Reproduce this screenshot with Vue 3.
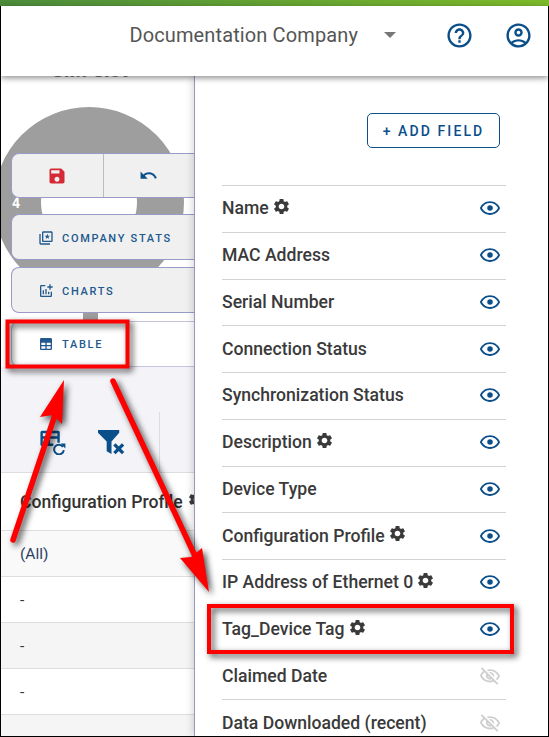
<template>
  <div class="app">
    <div class="topbar"></div>
    <div class="frame">
      <header class="header">
        <span class="company">Documentation Company</span>
        <span class="caret"></span>
        <svg class="head-icon help" viewBox="0 0 24 24"><path d="M11 18h2v-2h-2v2zm1-16C6.48 2 2 6.48 2 12s4.48 10 10 10 10-4.48 10-10S17.52 2 12 2zm0 18c-4.41 0-8-3.59-8-8s3.59-8 8-8 8 3.59 8 8-3.59 8-8 8zm0-14c-2.21 0-4 1.79-4 4h2c0-1.1.9-2 2-2s2 .9 2 2c0 2-3 1.75-3 5h2c0-2.25 3-2.5 3-5 0-2.21-1.79-4-4-4z" /></svg>
        <svg class="head-icon user" viewBox="0 0 24 24"><path d="M12 2C6.48 2 2 6.48 2 12s4.48 10 10 10 10-4.48 10-10S17.52 2 12 2zM7.35 18.5C8.66 17.56 10.26 17 12 17s3.34.56 4.65 1.5c-1.31.94-2.91 1.5-4.65 1.5s-3.34-.56-4.65-1.5zm10.79-1.38C16.45 15.8 14.32 15 12 15s-4.45.8-6.14 2.12C4.7 15.73 4 13.95 4 12c0-4.42 3.58-8 8-8s8 3.58 8 8c0 1.95-.7 3.73-1.86 5.12zM12 6c-1.93 0-3.5 1.57-3.5 3.5S10.07 13 12 13s3.5-1.57 3.5-3.5S13.93 6 12 6zm0 5c-.83 0-1.5-.67-1.5-1.5S11.17 8 12 8s1.5.67 1.5 1.5S12.83 11 12 11z" /></svg>
      </header>

      <div class="body">
        <section class="left">
          <div class="chart">
            <div class="donut"></div>
            <span class="slice-label">4</span>
            <div class="stub"></div>
          </div>
          <div class="pane-title">SIM Slot</div>

          <div class="tabs">
            <div class="actions">
              <div class="action">
                <svg class="save" viewBox="0 0 24 24"><path d="M17 3H5c-1.11 0-2 .9-2 2v14c0 1.1.89 2 2 2h14c1.1 0 2-.9 2-2V7l-4-4zm-5 16c-1.66 0-3-1.34-3-3s1.34-3 3-3 3 1.34 3 3-1.34 3-3 3zm3-10H5V5h10v4z" /></svg>
              </div>
              <div class="action">
                <svg class="undo" viewBox="0 0 24 24"><path d="M12.5 8c-2.65 0-5.05.99-6.9 2.6L2 7v9h9l-3.62-3.62c1.39-1.16 3.16-1.88 5.12-1.88 3.54 0 6.55 2.31 7.6 5.5l2.37-.78C21.08 11.03 17.15 8 12.5 8z" /></svg>
              </div>
            </div>
            <div class="tab stats">
              <svg class="tab-icon" viewBox="0 0 24 24"><path d="M4 6H2v14c0 1.1.9 2 2 2h14v-2H4V6zm16-4H8c-1.1 0-2 .9-2 2v12c0 1.1.9 2 2 2h12c1.1 0 2-.9 2-2V4c0-1.1-.9-2-2-2zm0 14H8V4h12v12z" /><polygon points="14,5.5 15.1,8.6 18.2,8.7 15.7,10.6 16.6,13.6 14,11.8 11.4,13.6 12.3,10.6 9.8,8.7 12.9,8.6" /></svg>
              <span>COMPANY STATS</span>
            </div>
            <div class="tab charts">
              <svg class="tab-icon" viewBox="0 0 24 24"><path d="M22 5v2h-3v3h-2V7h-3V5h3V2h2v3h3zm-3 14H5V5h6V3H5c-1.1 0-2 .9-2 2v14c0 1.1.9 2 2 2h14c1.1 0 2-.9 2-2v-6h-2v6zm-4-6v4h2v-4h-2zm-4 4h2V9h-2v8zm-2 0v-6H7v6h2z" /></svg>
              <span>CHARTS</span>
            </div>
            <div class="tab active">
              <svg class="tab-icon" viewBox="0 0 24 24"><path d="M3 5c0-1.1.9-2 2-2h14c1.1 0 2 .9 2 2v14c0 1.1-.9 2-2 2H5c-1.1 0-2-.9-2-2V5zm2 5v3.5h6V10H5zm8 0v3.5h6V10h-6zM5 15.500V19h6v-3.500H5zm8 0V19h6v-3.500h-6z" fill-rule="evenodd" /></svg>
              <span>TABLE</span>
            </div>
          </div>

          <div class="toolbar">
            <svg class="tool reset" viewBox="0 0 36 32">
              <path d="M3 2h22a2 2 0 0 1 2 2v13h-3v-5H15v6h4v3H5a2 2 0 0 1-2-2V4a2 2 0 0 1 2-2zm3 3v4h18V5H6zm0 7v6h6v-6H6z" fill-rule="evenodd" />
              <path d="M31 22a6 6 0 1 0 1 4" class="reset-arc" />
              <polygon points="28,18 34,18 34,24" />
            </svg>
            <svg class="tool clear" viewBox="0 0 30 28">
              <path d="M1 2h22v3l-8 9v13l-5-3V14L1 5z" />
              <path d="M18 17l9 9M27 17l-9 9" class="clear-x" />
            </svg>
            <div class="tool-sep"></div>
          </div>

          <div class="grid-head">
            <span>Configuration Profile</span>
            <svg class="gear" viewBox="0 0 24 24"><path :d="gearPath" /></svg>
          </div>
          <div v-for="(cell, i) in cells" :key="i" class="grid-row" :class="cell.tone">{{ cell.text }}</div>
        </section>

        <section class="right">
          <button class="add-btn">+ ADD FIELD</button>
          <ul class="fields">
            <li v-for="f in fields" :key="f.name" class="field">
              <span class="field-name">{{ f.name }}</span>
              <svg v-if="f.gear" class="gear" viewBox="0 0 24 24"><path :d="gearPath" /></svg>
              <svg v-if="f.hidden" class="eye off" viewBox="0 0 24 24"><path d="M12 6.500c3.790 0 7.170 2.130 8.820 5.500-.59 1.220-1.420 2.270-2.410 3.120l1.410 1.410c1.390-1.230 2.490-2.770 3.180-4.530C21.270 7.610 17 4.500 12 4.500c-1.270 0-2.490.2-3.640.57l1.650 1.650C10.660 6.590 11.320 6.500 12 6.500zm-1.070 1.140L13 9.710c.57.25 1.030.71 1.280 1.280l2.070 2.070c.08-.34.14-.7.14-1.070C16.500 9.500 14.480 7.500 12 7.500c-.37 0-.72.05-1.070.14zM2.010 3.870l2.680 2.680C3.060 7.830 1.770 9.530 1 11.500 2.730 15.890 7 19 12 19c1.520 0 2.980-.29 4.320-.82l3.420 3.420 1.410-1.410L3.420 2.450 2.010 3.870zm7.500 7.500l2.610 2.610c-.04.01-.08.02-.12.02-1.380 0-2.500-1.120-2.500-2.500 0-.05.01-.08.01-.13zm-3.400-3.400l1.750 1.750c-.23.55-.36 1.150-.36 1.780 0 2.480 2.020 4.500 4.500 4.500.63 0 1.230-.13 1.770-.36l.98.98c-.88.24-1.800.38-2.750.38-3.790 0-7.170-2.130-8.820-5.500.7-1.430 1.720-2.610 2.930-3.530z" /></svg>
              <svg v-else class="eye" viewBox="0 0 24 24"><path d="M12 6.500c3.790 0 7.170 2.130 8.820 5.500-1.650 3.370-5.020 5.500-8.820 5.500S4.830 15.370 3.180 12C4.830 8.630 8.210 6.500 12 6.500m0-2C7 4.500 2.730 7.610 1 12c1.730 4.390 6 7.500 11 7.500s9.270-3.110 11-7.500c-1.730-4.390-6-7.500-11-7.500z" /><circle cx="12" cy="12" r="3" /></svg>
            </li>
          </ul>
        </section>
      </div>
    </div>

    <!-- callouts drawn on top of the screenshot -->
    <svg class="callouts" viewBox="0 0 549 737">
      <rect x="7.500" y="321.500" width="120" height="45" />
      <rect x="209" y="606" width="303" height="46" />
      <path class="shaft" d="M13 540L56 412" />
      <polygon points="64,380 40,417 53,415 62,424" />
      <path class="shaft" d="M113 381L195 556" />
      <polygon points="209,592 180,558 191,557 202,548" />
    </svg>
  </div>
</template>

<script setup>
const gearPath = 'M19.140 12.940c.04-.3.06-.61.06-.94 0-.32-.02-.64-.07-.94l2.030-1.580c.18-.14.23-.41.12-.61l-1.920-3.320c-.12-.22-.37-.29-.59-.22l-2.390.96c-.5-.38-1.030-.7-1.620-.94l-.36-2.540c-.04-.24-.24-.41-.48-.41h-3.840c-.24 0-.43.17-.47.41l-.36 2.540c-.59.24-1.130.57-1.620.94l-2.390-.96c-.22-.08-.47 0-.59.22L2.740 8.870c-.12.21-.08.47.12.61l2.030 1.580c-.05.3-.09.63-.09.94s.02.64.07.94l-2.030 1.580c-.18.14-.23.41-.12.61l1.920 3.320c.12.22.37.29.59.22l2.390-.96c.5.38 1.030.7 1.620.94l.36 2.540c.05.24.24.41.48.41h3.840c.24 0 .44-.17.47-.41l.36-2.540c.59-.24 1.130-.56 1.620-.94l2.390.96c.22.08.47 0 .59-.22l1.920-3.320c.12-.22.07-.47-.12-.61l-2.010-1.580zM12 15.600c-1.980 0-3.600-1.620-3.600-3.600s1.620-3.600 3.600-3.600 3.600 1.620 3.600 3.600-1.620 3.600-3.600 3.600z'

const cells = [
  { text: '(All)', tone: 'all' },
  { text: '-', tone: 'plain' },
  { text: '-', tone: 'shade' },
  { text: '-', tone: 'plain' },
  { text: '', tone: 'shade' }
]

const fields = [
  { name: 'Name', gear: true },
  { name: 'MAC Address' },
  { name: 'Serial Number' },
  { name: 'Connection Status' },
  { name: 'Synchronization Status' },
  { name: 'Description', gear: true },
  { name: 'Device Type' },
  { name: 'Configuration Profile', gear: true },
  { name: 'IP Address of Ethernet 0', gear: true },
  { name: 'Tag_Device Tag', gear: true },
  { name: 'Claimed Date', hidden: true },
  { name: 'Data Downloaded (recent)', hidden: true }
]
</script>

<style scoped>
.app {
  position: relative;
  width: 549px;
  height: 737px;
  display: flex;
  flex-direction: column;
  overflow: hidden;
  background: #fff;
  font-family: Roboto, "Liberation Sans", sans-serif;
}

.topbar {
  height: 6px;
  flex-shrink: 0;
  background: linear-gradient(90deg, #4c8c3c, #7dba2a);
}

.frame {
  flex: 1;
  min-height: 0;
  display: flex;
  flex-direction: column;
  border-left: 1px solid #000;
  border-right: 1px solid #000;
  border-bottom: 1px solid #000;
}

.header {
  position: relative;
  z-index: 3;
  height: 70px;
  flex-shrink: 0;
  box-sizing: border-box;
  display: flex;
  align-items: center;
  justify-content: flex-end;
  padding: 0 15px 12px 0;
  background: #fff;
  box-shadow: 0 2px 6px rgba(0, 0, 0, 0.45);
}

.company {
  font-size: 20px;
  letter-spacing: 0.12px;
  color: #555;
  margin-right: 26px;
}

.caret {
  width: 0;
  height: 0;
  border-left: 6.5px solid transparent;
  border-right: 6.5px solid transparent;
  border-top: 6.5px solid #777;
  margin-right: 49px;
}

.head-icon {
  width: 29px;
  height: 29px;
  fill: #0b4f8a;
}

.help {
  margin-right: 30px;
}

.body {
  flex: 1;
  min-height: 0;
  display: flex;
}

.left {
  position: relative;
  width: 193px;
  flex-shrink: 0;
  overflow: hidden;
  background: #fff;
  border-right: 1px solid #a9a9d2;
  display: flex;
  flex-direction: column;
}

.chart {
  position: absolute;
  inset: 0;
}

.donut {
  position: absolute;
  left: -7px;
  top: 31px;
  width: 190px;
  height: 190px;
  box-sizing: border-box;
  border-radius: 50%;
  border: 47px solid #9e9e9e;
  background: #fff;
}

.slice-label {
  position: absolute;
  left: 11px;
  top: 119px;
  font-size: 14px;
  font-weight: 700;
  color: #fff;
}

.stub {
  position: absolute;
  left: 82px;
  top: 235px;
  width: 15px;
  height: 12px;
  background: #9e9e9e;
}

.pane-title {
  position: relative;
  height: 8px;
  margin-top: -13px;
  text-align: center;
  font-size: 20px;
  font-weight: 700;
  line-height: 15px;
  color: #777;
  padding-right: 16px;
}

.tabs {
  position: relative;
  display: flex;
  flex-direction: column;
  margin-top: 82px;
}

.actions {
  display: flex;
  height: 45px;
  margin-left: 10px;
  box-sizing: border-box;
  background: #f0f0f0;
  border: 1px solid #9a9ac8;
  border-right: none;
  border-radius: 8px 0 0 8px;
  margin-bottom: 16px;
}

.action {
  flex: 1;
  display: flex;
  align-items: center;
  justify-content: center;
}

.action + .action {
  border-left: 1px solid #bbb;
}

.save {
  width: 20px;
  height: 20px;
  fill: #d32a35;
}

.undo {
  width: 19px;
  height: 19px;
  fill: #0b4f8a;
}

.tab {
  height: 46px;
  margin-left: 10px;
  box-sizing: border-box;
  display: flex;
  align-items: center;
  padding-left: 26px;
  gap: 8px;
  background: #f0f0f0;
  border: 1px solid #9a9ac8;
  border-right: none;
  border-radius: 8px 0 0 8px;
  font-size: 11px;
  font-weight: 500;
  letter-spacing: 1.7px;
  color: #22598f;
}

.stats {
  margin-bottom: 7px;
  padding-top: 2px;
}

.charts {
  margin-bottom: 8px;
  padding-top: 2px;
}

.tab.active {
  background: #fff;
  border-color: #c4c4de;
}

.tab-icon {
  width: 16px;
  height: 16px;
  fill: #22598f;
  flex-shrink: 0;
}

.toolbar {
  position: relative;
  height: 106px;
  flex-shrink: 0;
  background: #f3f3f8;
  border-bottom: 1px solid #ddd;
  box-sizing: border-box;
  display: flex;
  align-items: flex-end;
  padding: 0 0 17px 37px;
  gap: 30px;
}

.tool {
  fill: #0b4f8a;
  flex-shrink: 0;
}

.reset {
  width: 29px;
  height: 26px;
}

.reset-arc {
  fill: none;
  stroke: #0b4f8a;
  stroke-width: 2.500;
}

.clear {
  width: 29px;
  height: 27px;
}

.clear-x {
  fill: none;
  stroke: #0b4f8a;
  stroke-width: 3.500;
}

.tool-sep {
  position: absolute;
  left: 158px;
  top: 45px;
  bottom: 0;
  width: 1px;
  background: #ddd;
}

.grid-head {
  height: 58px;
  flex-shrink: 0;
  box-sizing: border-box;
  display: flex;
  align-items: center;
  gap: 1px;
  padding-left: 19px;
  white-space: nowrap;
  background: #fff;
  border-bottom: 1px solid #ddd;
  font-size: 17.600px;
  font-weight: 500;
  color: #333;
}

.grid-row {
  height: 46px;
  flex-shrink: 0;
  box-sizing: border-box;
  display: flex;
  align-items: center;
  padding-left: 19px;
  border-bottom: 1px solid #ddd;
  font-size: 15.500px;
  color: #333;
}

.grid-row.all {
  background: #f9f9f9;
  color: #2b3f63;
}

.grid-row.shade {
  background: #f5f5f5;
}

.right {
  position: relative;
  z-index: 2;
  flex: 1;
  min-width: 0;
  display: flex;
  flex-direction: column;
  background: #fff;
  box-shadow: -3px 0 7px rgba(0, 0, 0, 0.14);
  padding: 37px 42px 0 27px;
}

.add-btn {
  align-self: flex-end;
  flex-shrink: 0;
  width: 133px;
  height: 35px;
  margin-right: 6px;
  background: #fff;
  border: 1px solid #0b4f8a;
  border-radius: 5px;
  font-family: inherit;
  font-size: 14px;
  font-weight: 500;
  letter-spacing: 2.100px;
  color: #0b4f8a;
  padding: 0;
}

.fields {
  list-style: none;
  margin: 37px 0 0;
  padding: 0;
}

.field {
  height: 46.750px;
  box-sizing: border-box;
  display: flex;
  align-items: center;
  border-top: 1px solid #d2d2d2;
  padding: 0 5px 1px 0;
  font-size: 17.600px;
  font-weight: 500;
  color: #3a3a3a;
}

.field-name {
  white-space: nowrap;
}

.gear {
  width: 19px;
  height: 19px;
  fill: #3a3a3a;
  margin: 0 0 4px 3px;
  flex-shrink: 0;
}

.eye {
  width: 22px;
  height: 22px;
  margin-left: auto;
  fill: #0b4f8a;
  flex-shrink: 0;
}

.eye.off {
  fill: #cfcfcf;
}

.callouts {
  position: absolute;
  inset: 0;
  z-index: 5;
  width: 549px;
  height: 737px;
  pointer-events: none;
  filter: drop-shadow(3px 3px 3px rgba(0, 0, 0, 0.7));
}

.callouts rect {
  fill: none;
  stroke: #f00;
  stroke-width: 4;
}

.callouts polygon {
  fill: #f00;
}

.callouts .shaft {
  fill: none;
  stroke: #f00;
  stroke-width: 5.500;
  stroke-linecap: round;
}
</style>
